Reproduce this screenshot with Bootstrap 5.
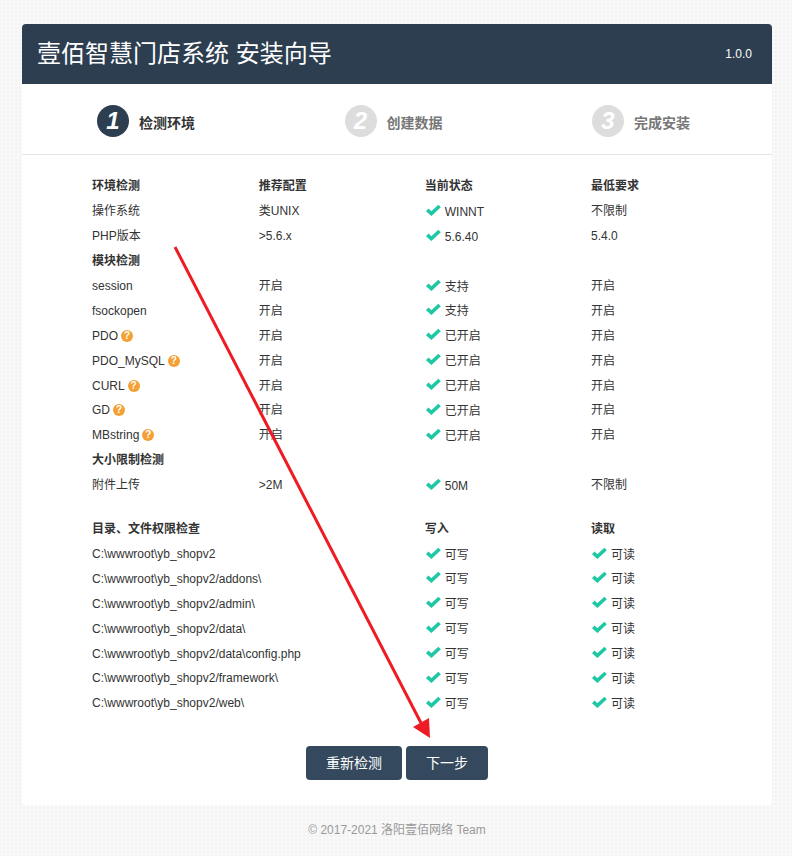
<!doctype html>
<html lang="zh-CN">
<head>
<meta charset="utf-8">
<title>安装向导</title>
<link href="https://cdn.jsdelivr.net/npm/bootstrap@5.3.0/dist/css/bootstrap.min.css" rel="stylesheet">
<style>
html,body{height:100%}
body{margin:0;font-family:"Liberation Sans","Noto Sans CJK SC",sans-serif;font-size:12px;color:#333;
 background-color:#f5f5f5;background-image:radial-gradient(circle,#fcfcfc .8px,transparent .9px);background-size:4px 4px;}
.stage{position:relative;width:792px;height:856px;padding:24px 20px 0 22px}
.panel{background:#fff;border-radius:4px;height:781px;overflow:hidden}
.panel-head{background:#2d3e50;height:60px;padding:0 20px 0 15px;color:#fff}
.panel-title{font-size:24px;line-height:1;margin:0;font-weight:400}
.panel-ver{font-size:12px;font-weight:400}
.steps{height:71px;border-bottom:1px solid #e5e5e5;padding:3px 0 0 75px}
.step-item{width:247.5px;flex:none;color:#777;font-weight:700;font-size:14px}
.step-item.on{color:#333}
.step-num{width:32px;height:32px;border-radius:50%;background:#ddd;color:#fff;font-size:24px;font-weight:700;font-style:italic;line-height:32px;text-align:center;margin-right:10px}
.step-item.on .step-num{background:#2d3e50}
.step-text{margin-top:6px}
.info{padding:19px 0 0 70px}
.info .line{height:24.9px;width:665px;margin:0;align-items:center}
.info .line>div{padding:0;width:166.25px;flex:none}
.info .line>div:first-child{width:166.75px}
.info .line>div:nth-child(2){width:166px}
.line.hd{font-weight:700}
.gap-top{margin-top:19.1px!important}
.stat{padding-top:1px!important}
.ok{width:15px;height:12px;margin:0 4px 0 1px;vertical-align:0}
.qm{display:inline-block;width:12px;height:12px;border-radius:50%;background:#f4a035;color:#fff;font-size:10px;line-height:12px;text-align:center;font-weight:700;margin-left:3px;vertical-align:1px}
.actions{margin-top:30px}
.btn-dark-blue{background:#34495e;color:#fff;border:0;border-radius:4px;height:34px;font-size:14px;font-weight:400;padding:0 20px;line-height:34px}
.btn-dark-blue:hover{background:#34495e;color:#fff}
.foot-note{text-align:center;color:#999;font-size:12px;font-weight:400;margin-top:16px}
.arrow-layer{position:absolute;left:0;top:0;pointer-events:none}
</style>
</head>
<body>
<svg width="0" height="0" class="d-block"><defs><symbol id="chk" viewBox="0 0 15 12"><path d="M1.2 5.8 L5.4 9.6 L13.6 2" fill="none" stroke="#1fc8a4" stroke-width="3.6"/></symbol></defs></svg>
<div class="stage">
<div class="panel">
  <div class="panel-head d-flex justify-content-between align-items-center">
    <h1 class="panel-title">壹佰智慧门店系统 安装向导</h1>
    <span class="panel-ver">1.0.0</span>
  </div>
  <div class="steps d-flex align-items-center">
    <div class="step-item on d-flex align-items-center"><span class="step-num">1</span><span class="step-text">检测环境</span></div>
    <div class="step-item d-flex align-items-center"><span class="step-num">2</span><span class="step-text">创建数据</span></div>
    <div class="step-item d-flex align-items-center"><span class="step-num">3</span><span class="step-text">完成安装</span></div>
  </div>
  <div class="info">
    <div class="line hd d-flex"><div>环境检测</div><div>推荐配置</div><div>当前状态</div><div>最低要求</div></div>
    <div class="line d-flex"><div>操作系统</div><div>类UNIX</div><div class="stat"><svg class="ok"><use href="#chk"/></svg>WINNT</div><div>不限制</div></div>
    <div class="line d-flex"><div>PHP版本</div><div>&gt;5.6.x</div><div class="stat"><svg class="ok"><use href="#chk"/></svg>5.6.40</div><div>5.4.0</div></div>
    <div class="line hd d-flex"><div>模块检测</div></div>
    <div class="line d-flex"><div>session</div><div>开启</div><div class="stat"><svg class="ok"><use href="#chk"/></svg>支持</div><div>开启</div></div>
    <div class="line d-flex"><div>fsockopen</div><div>开启</div><div class="stat"><svg class="ok"><use href="#chk"/></svg>支持</div><div>开启</div></div>
    <div class="line d-flex"><div>PDO<span class="qm">?</span></div><div>开启</div><div class="stat"><svg class="ok"><use href="#chk"/></svg>已开启</div><div>开启</div></div>
    <div class="line d-flex"><div>PDO_MySQL<span class="qm">?</span></div><div>开启</div><div class="stat"><svg class="ok"><use href="#chk"/></svg>已开启</div><div>开启</div></div>
    <div class="line d-flex"><div>CURL<span class="qm">?</span></div><div>开启</div><div class="stat"><svg class="ok"><use href="#chk"/></svg>已开启</div><div>开启</div></div>
    <div class="line d-flex"><div>GD<span class="qm">?</span></div><div>开启</div><div class="stat"><svg class="ok"><use href="#chk"/></svg>已开启</div><div>开启</div></div>
    <div class="line d-flex"><div>MBstring<span class="qm">?</span></div><div>开启</div><div class="stat"><svg class="ok"><use href="#chk"/></svg>已开启</div><div>开启</div></div>
    <div class="line hd d-flex"><div>大小限制检测</div></div>
    <div class="line d-flex"><div>附件上传</div><div>&gt;2M</div><div class="stat"><svg class="ok"><use href="#chk"/></svg>50M</div><div>不限制</div></div>
    <div class="line hd d-flex gap-top"><div>目录、文件权限检查</div><div></div><div>写入</div><div>读取</div></div>
    <div class="line d-flex"><div class="text-nowrap">C:\wwwroot\yb_shopv2</div><div></div><div class="stat"><svg class="ok"><use href="#chk"/></svg>可写</div><div class="stat"><svg class="ok"><use href="#chk"/></svg>可读</div></div>
    <div class="line d-flex"><div class="text-nowrap">C:\wwwroot\yb_shopv2/addons\</div><div></div><div class="stat"><svg class="ok"><use href="#chk"/></svg>可写</div><div class="stat"><svg class="ok"><use href="#chk"/></svg>可读</div></div>
    <div class="line d-flex"><div class="text-nowrap">C:\wwwroot\yb_shopv2/admin\</div><div></div><div class="stat"><svg class="ok"><use href="#chk"/></svg>可写</div><div class="stat"><svg class="ok"><use href="#chk"/></svg>可读</div></div>
    <div class="line d-flex"><div class="text-nowrap">C:\wwwroot\yb_shopv2/data\</div><div></div><div class="stat"><svg class="ok"><use href="#chk"/></svg>可写</div><div class="stat"><svg class="ok"><use href="#chk"/></svg>可读</div></div>
    <div class="line d-flex"><div class="text-nowrap">C:\wwwroot\yb_shopv2/data\config.php</div><div></div><div class="stat"><svg class="ok"><use href="#chk"/></svg>可写</div><div class="stat"><svg class="ok"><use href="#chk"/></svg>可读</div></div>
    <div class="line d-flex"><div class="text-nowrap">C:\wwwroot\yb_shopv2/framework\</div><div></div><div class="stat"><svg class="ok"><use href="#chk"/></svg>可写</div><div class="stat"><svg class="ok"><use href="#chk"/></svg>可读</div></div>
    <div class="line d-flex"><div class="text-nowrap">C:\wwwroot\yb_shopv2/web\</div><div></div><div class="stat"><svg class="ok"><use href="#chk"/></svg>可写</div><div class="stat"><svg class="ok"><use href="#chk"/></svg>可读</div></div>
  </div>
  <div class="actions d-flex justify-content-center gap-1">
    <button type="button" class="btn btn-dark-blue">重新检测</button>
    <button type="button" class="btn btn-dark-blue">下一步</button>
  </div>
</div>
<div class="foot-note">© 2017-2021 洛阳壹佰网络 Team</div>
<svg class="arrow-layer" width="792" height="856" viewBox="0 0 792 856"><line x1="175" y1="247" x2="421" y2="723" stroke="#ed1c24" stroke-width="3"/><polygon points="430,738 413,727 429,718" fill="#ed1c24"/></svg>
</div>
<script src="https://cdn.jsdelivr.net/npm/bootstrap@5.3.0/dist/js/bootstrap.bundle.min.js"></script>
</body>
</html>
